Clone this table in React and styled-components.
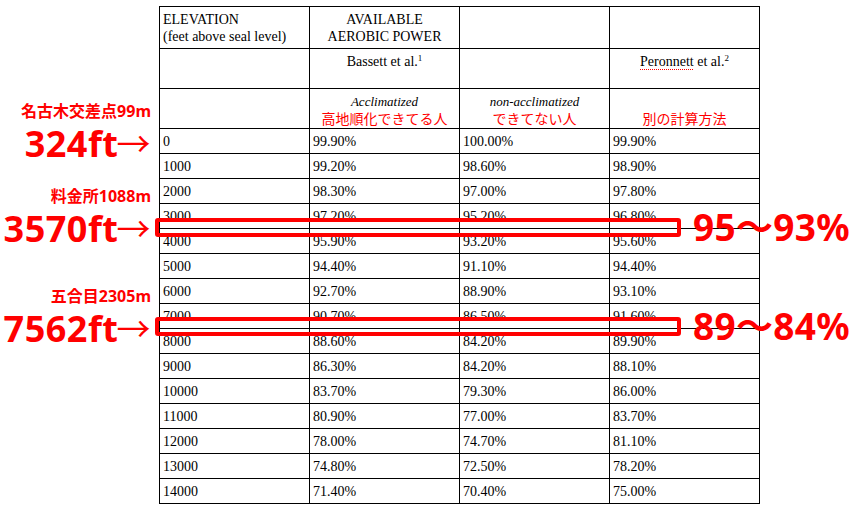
import styled, { createGlobalStyle } from 'styled-components';

const GlobalStyle = createGlobalStyle`
  body {
    margin: 0;
    background: #fff;
  }
`;

const rows = [
  ['0', '99.90%', '100.00%', '99.90%'],
  ['1000', '99.20%', '98.60%', '98.90%'],
  ['2000', '98.30%', '97.00%', '97.80%'],
  ['3000', '97.20%', '95.20%', '96.80%'],
  ['4000', '95.90%', '93.20%', '95.60%'],
  ['5000', '94.40%', '91.10%', '94.40%'],
  ['6000', '92.70%', '88.90%', '93.10%'],
  ['7000', '90.70%', '86.50%', '91.60%'],
  ['8000', '88.60%', '84.20%', '89.90%'],
  ['9000', '86.30%', '84.20%', '88.10%'],
  ['10000', '83.70%', '79.30%', '86.00%'],
  ['11000', '80.90%', '77.00%', '83.70%'],
  ['12000', '78.00%', '74.70%', '81.10%'],
  ['13000', '74.80%', '72.50%', '78.20%'],
  ['14000', '71.40%', '70.40%', '75.00%'],
];

const Figure = styled.div`
  position: relative;
  display: flex;
  align-items: flex-start;
  width: 857px;
  height: 509px;
  overflow: hidden;
`;

const Callouts = styled.div`
  width: 159px;
  flex-shrink: 0;
  box-sizing: border-box;
  padding-right: 8px;
  display: flex;
  flex-direction: column;
  align-items: flex-end;
  font-family: "Noto Sans", "Noto Sans CJK JP", sans-serif;
  font-weight: 700;
  color: #ff0000;
  white-space: nowrap;
`;

const Callout = styled.div`
  margin-top: ${p => p.$offset}px;
  display: flex;
  flex-direction: column;
  align-items: flex-end;
  gap: 2px;
`;

const Place = styled.div`
  font-size: 16px;
  line-height: 20px;
`;

const Feet = styled.div`
  font-size: 36px;
  line-height: 40px;
  letter-spacing: 0.5px;

  span {
    font-family: "Noto Sans CJK JP", sans-serif;
    font-weight: 400;
    font-size: 34px;
    margin-left: -2px;
  }
`;

const Sheet = styled.table`
  margin-top: 6px;
  border-collapse: collapse;
  table-layout: fixed;
  width: 601px;
  font-family: "Liberation Serif", "Times New Roman", serif;
  font-size: 14px;
  color: #000;
`;

const Col = styled.col`
  width: 150px;
`;

const Row = styled.tr`
  height: ${p => p.$h}px;
`;

const Cell = styled.td`
  border: 1px solid #000;
  padding: ${p => (p.$top ? '4px 3px 0' : '0 3px')};
  text-align: ${p => (p.$center ? 'center' : 'left')};
  vertical-align: ${p => (p.$top ? 'top' : 'middle')};
  line-height: 17px;
  overflow: hidden;
  white-space: nowrap;
`;

const Sup = styled.sup`
  font-size: 9px;
  vertical-align: top;
  position: relative;
  top: -3px;
`;

const Flagged = styled.span`
  text-decoration: underline dotted #ff0000;
  text-decoration-thickness: 1px;
  text-underline-offset: 3px;
`;

const Italic = styled.div`
  font-style: italic;
  font-size: 13px;
  height: 17px;
`;

const Note = styled.div`
  font-family: "Noto Sans CJK JP", sans-serif;
  font-size: 14px;
  line-height: 17px;
  color: #ff0000;
`;

const Marker = styled.div`
  position: absolute;
  left: 155px;
  top: ${p => p.$top}px;
  height: 19px;
  display: flex;
  align-items: center;
  gap: 12px;
`;

const Box = styled.div`
  width: 526px;
  height: 19px;
  box-sizing: border-box;
  border: 4px solid #ff0000;
  border-radius: 3px;
`;

const Range = styled.div`
  font-family: "Noto Sans", "Noto Sans CJK JP", sans-serif;
  font-weight: 700;
  font-size: 37px;
  line-height: 19px;
  letter-spacing: 0.3px;
  color: #ff0000;
  white-space: nowrap;
  margin-top: -3px;
`;

export default function App() {
  return (
    <>
      <GlobalStyle />
      <Figure>
        <Callouts>
          <Callout $offset={101}>
            <Place>名古木交差点99m</Place>
            <Feet>324ft<span>→</span></Feet>
          </Callout>
          <Callout $offset={22}>
            <Place>料金所1088m</Place>
            <Feet>3570ft<span>→</span></Feet>
          </Callout>
          <Callout $offset={37}>
            <Place>五合目2305m</Place>
            <Feet>7562ft<span>→</span></Feet>
          </Callout>
        </Callouts>

        <Sheet>
          <colgroup>
            <Col />
            <Col />
            <Col />
            <Col />
          </colgroup>
          <tbody>
            <Row $h={42}>
              <Cell $top>ELEVATION<br />(feet above seal level)</Cell>
              <Cell $top $center>AVAILABLE<br />AEROBIC POWER</Cell>
              <Cell />
              <Cell />
            </Row>
            <Row $h={40}>
              <Cell />
              <Cell $top $center>Bassett et al.<Sup>1</Sup></Cell>
              <Cell />
              <Cell $top $center><Flagged>Peronnett</Flagged> et al.<Sup>2</Sup></Cell>
            </Row>
            <Row $h={40}>
              <Cell />
              <Cell $top $center>
                <Italic>Acclimatized</Italic>
                <Note>高地順化できてる人</Note>
              </Cell>
              <Cell $top $center>
                <Italic>non-acclimatized</Italic>
                <Note>できてない人</Note>
              </Cell>
              <Cell $top $center>
                <Italic />
                <Note>別の計算方法</Note>
              </Cell>
            </Row>
            {rows.map(r => (
              <Row key={r[0]} $h={25}>
                {r.map((v, i) => (
                  <Cell key={i}>{v}</Cell>
                ))}
              </Row>
            ))}
          </tbody>
        </Sheet>

        <Marker $top={218}>
          <Box />
          <Range>95〜93%</Range>
        </Marker>
        <Marker $top={317}>
          <Box />
          <Range>89〜84%</Range>
        </Marker>
      </Figure>
    </>
  );
}
